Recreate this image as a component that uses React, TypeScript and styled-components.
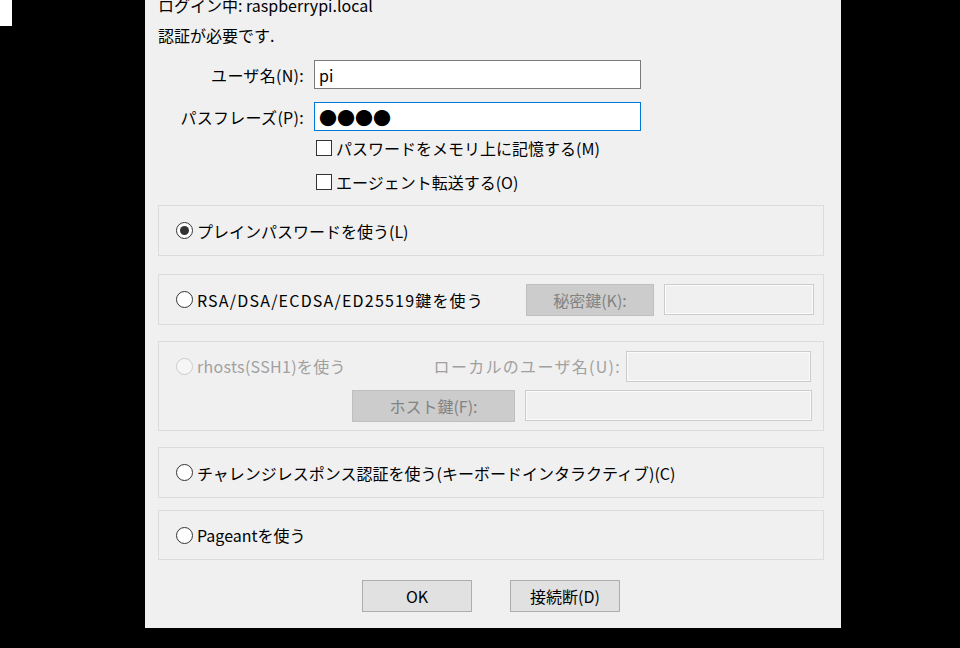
import React from "react";
import styled, { createGlobalStyle, css } from "styled-components";

const Global = createGlobalStyle`
  html, body { margin: 0; padding: 0; background: #000; }
  #root { min-height: 100vh; }
  * { box-sizing: border-box; }
`;

const Page = styled.div`
  display: flex;
  align-items: flex-start;
  width: 960px;
  height: 648px;
  background: #000;
  overflow: hidden;
  font-family: "Noto Sans CJK JP", "Noto Sans", sans-serif;
  font-size: 16px;
  color: #000;
`;

const CursorMark = styled.div`
  width: 12px;
  height: 26px;
  background: #fff;
  flex: none;
`;

const Dialog = styled.div`
  margin-left: 133px;
  width: 696px;
  height: 628px;
  background: #f0f0f0;
  overflow: hidden;
  padding: 0 17px 0 13px;
  display: flex;
  flex-direction: column;
`;

const InfoLine = styled.div<{ $mt: number }>`
  margin-top: ${(p) => p.$mt}px;
  height: 20px;
  line-height: 20px;
  white-space: nowrap;
`;

const FormGrid = styled.div`
  margin-top: 15px;
  display: grid;
  grid-template-columns: 146px 327px;
  column-gap: 10px;
  row-gap: 13px;
  align-items: center;
`;

const FieldLabel = styled.label`
  text-align: right;
  white-space: nowrap;
  line-height: 20px;
  letter-spacing: 0.3px;
`;

const TextBox = styled.div<{ $focused?: boolean }>`
  height: 29px;
  background: #fff;
  border: 1px solid ${(p) => (p.$focused ? "#0078d7" : "#7a7a7a")};
  padding: 0 4px;
  display: flex;
  align-items: center;
  line-height: 20px;
`;

const Dots = styled.span`
  font-size: 18px;
  line-height: 20px;
`;

const CheckRow = styled.label<{ $mt: number }>`
  margin-top: ${(p) => p.$mt}px;
  margin-left: 158px;
  display: flex;
  align-items: center;
  gap: 4px;
  height: 20px;
  line-height: 20px;
  white-space: nowrap;
`;

const CheckBox = styled.span`
  width: 16px;
  height: 16px;
  border: 1px solid #333;
  background: #fff;
  flex: none;
`;

const Group = styled.div<{ $mt: number; $h: number }>`
  margin-top: ${(p) => p.$mt}px;
  height: ${(p) => p.$h}px;
  border: 1px solid #dcdcdc;
  display: flex;
  flex-direction: column;
  justify-content: center;
  padding: 0 9px 0 17px;
  flex: none;
`;

const GroupRow = styled.div<{ $end?: boolean; $pr?: number; $mt?: number }>`
  display: flex;
  align-items: center;
  justify-content: ${(p) => (p.$end ? "flex-end" : "flex-start")};
  padding-right: ${(p) => p.$pr ?? 0}px;
  margin-top: ${(p) => p.$mt ?? 0}px;
  gap: 10px;
`;

const RadioLabel = styled.label<{ $disabled?: boolean; $spacing?: number }>`
  display: flex;
  align-items: center;
  gap: 4px;
  flex: 1;
  white-space: nowrap;
  line-height: 20px;
  letter-spacing: ${(p) => p.$spacing ?? 0}px;
  color: ${(p) => (p.$disabled ? "#a0a0a0" : "#000")};
`;

const RadioCircle = styled.span<{ $checked?: boolean; $disabled?: boolean }>`
  width: 17px;
  height: 17px;
  border-radius: 50%;
  flex: none;
  border: 1px solid ${(p) => (p.$disabled ? "#cccccc" : "#333")};
  background: ${(p) => (p.$disabled ? "#f6f6f6" : "#fff")};
  display: flex;
  align-items: center;
  justify-content: center;
  ${(p) =>
    p.$checked &&
    css`
      &::after {
        content: "";
        width: 9px;
        height: 9px;
        border-radius: 50%;
        background: #333;
      }
    `}
`;

const DisabledButton = styled.button<{ $w: number }>`
  width: ${(p) => p.$w}px;
  height: 32px;
  background: #cccccc;
  border: 1px solid #bfbfbf;
  color: #838383;
  font: inherit;
  line-height: 20px;
  padding: 0;
  flex: none;
`;

const DisabledField = styled.div<{ $w: number }>`
  width: ${(p) => p.$w}px;
  height: 31px;
  background: #f0f0f0;
  border: 1px solid #cccccc;
  box-shadow: inset 0 0 0 1px #fbfbfb;
  flex: none;
`;

const DisabledLabel = styled.span`
  color: #a0a0a0;
  white-space: nowrap;
  line-height: 20px;
  letter-spacing: 1.3px;
  margin-right: -5px;
`;

const ButtonRow = styled.div`
  margin-top: 20px;
  display: flex;
  justify-content: center;
  gap: 38px;
`;

const PushButton = styled.button`
  width: 110px;
  height: 32px;
  background: #e1e1e1;
  border: 1px solid #adadad;
  color: #000;
  font: inherit;
  line-height: 20px;
  padding: 0;
`;

export default function App() {
  return (
    <>
      <Global />
      <Page>
        <CursorMark />
        <Dialog>
          <InfoLine $mt={-5}>ログイン中: raspberrypi.local</InfoLine>
          <InfoLine $mt={10}>認証が必要です.</InfoLine>
          <FormGrid>
            <FieldLabel>ユーザ名(N):</FieldLabel>
            <TextBox>pi</TextBox>
            <FieldLabel>パスフレーズ(P):</FieldLabel>
            <TextBox $focused>
              <Dots>●●●●</Dots>
            </TextBox>
          </FormGrid>
          <CheckRow $mt={7}>
            <CheckBox />
            パスワードをメモリ上に記憶する(M)
          </CheckRow>
          <CheckRow $mt={14}>
            <CheckBox />
            エージェント転送する(O)
          </CheckRow>

          <Group $mt={13} $h={51}>
            <GroupRow>
              <RadioLabel>
                <RadioCircle $checked />
                プレインパスワードを使う(L)
              </RadioLabel>
            </GroupRow>
          </Group>

          <Group $mt={18} $h={51}>
            <GroupRow>
              <RadioLabel $spacing={1.2}>
                <RadioCircle />
                RSA/DSA/ECDSA/ED25519鍵を使う
              </RadioLabel>
              <DisabledButton $w={128}>秘密鍵(K):</DisabledButton>
              <DisabledField $w={150} />
            </GroupRow>
          </Group>

          <Group $mt={16} $h={90}>
            <GroupRow $pr={3}>
              <RadioLabel $disabled $spacing={0.3}>
                <RadioCircle $disabled />
                rhosts(SSH1)を使う
              </RadioLabel>
              <DisabledLabel>ローカルのユーザ名(U):</DisabledLabel>
              <DisabledField $w={185} />
            </GroupRow>
            <GroupRow $end $pr={2} $mt={8}>
              <DisabledButton $w={163}>ホスト鍵(F):</DisabledButton>
              <DisabledField $w={287} />
            </GroupRow>
          </Group>

          <Group $mt={16} $h={51}>
            <GroupRow>
              <RadioLabel>
                <RadioCircle />
                チャレンジレスポンス認証を使う(キーボードインタラクティブ)(C)
              </RadioLabel>
            </GroupRow>
          </Group>

          <Group $mt={12} $h={50}>
            <GroupRow>
              <RadioLabel>
                <RadioCircle />
                Pageantを使う
              </RadioLabel>
            </GroupRow>
          </Group>

          <ButtonRow>
            <PushButton>OK</PushButton>
            <PushButton>接続断(D)</PushButton>
          </ButtonRow>
        </Dialog>
      </Page>
    </>
  );
}
